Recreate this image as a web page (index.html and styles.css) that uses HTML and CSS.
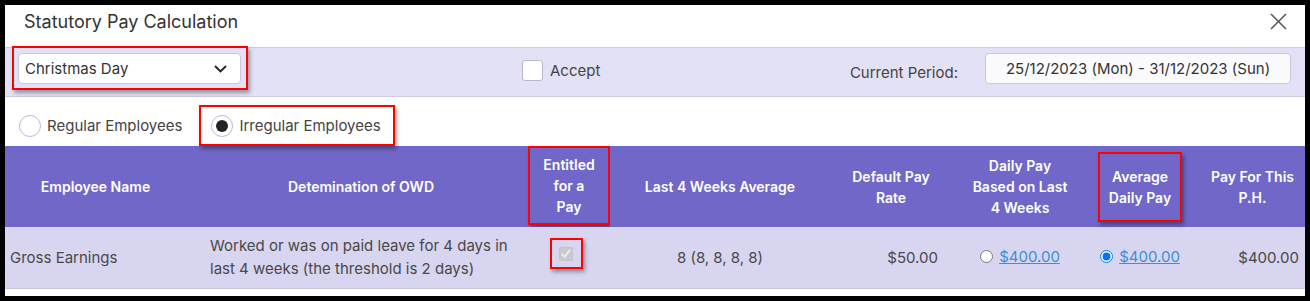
FILE: index.html
```html
<!DOCTYPE html>
<html lang="en">
<head>
    <meta charset="UTF-8">
    <title>Statutory Pay Calculation</title>
    <link rel="stylesheet" href="styles.css">
</head>
<body>
    <div class="dialog">
        <div class="dialog-title">
            <h2>Statutory Pay Calculation</h2>
            <svg class="close" width="17" height="17" viewBox="0 0 17 17">
                <path d="M1 1 L16 16 M16 1 L1 16" stroke="#555" stroke-width="1.5" fill="none"/>
            </svg>
        </div>

        <div class="filter-bar">
            <span class="mark mark--select">
                <span class="select">
                    <span>Christmas Day</span>
                    <svg width="13" height="8" viewBox="0 0 13 8">
                        <path d="M1 1 L6.5 6.5 L12 1" stroke="#222" stroke-width="1.8" fill="none"/>
                    </svg>
                </span>
            </span>
            <label class="accept">
                <span class="box"></span>
                Accept
            </label>
            <span class="period-label">Current Period:</span>
            <span class="period">25/12/2023 (Mon) - 31/12/2023 (Sun)</span>
        </div>

        <div class="type-row">
            <label class="radio-item">
                <span class="radio"></span>
                Regular Employees
            </label>
            <label class="radio-item mark mark--type">
                <span class="radio radio--on"></span>
                Irregular Employees
            </label>
        </div>

        <table class="pay-table">
            <colgroup>
                <col style="width: 181px">
                <col style="width: 342px">
                <col style="width: 82px">
                <col style="width: 220px">
                <col style="width: 114px">
                <col style="width: 152px">
                <col style="width: 88px">
                <col style="width: 121px">
            </colgroup>
            <thead>
                <tr>
                    <th>Employee Name</th>
                    <th class="th-owd">Detemination of OWD</th>
                    <th class="th-entitled"><div class="mark-cell">Entitled<br>for a<br>Pay</div></th>
                    <th>Last 4 Weeks Average</th>
                    <th class="th-rate">Default Pay<br>Rate</th>
                    <th>Daily Pay<br>Based on Last<br>4 Weeks</th>
                    <th class="th-avg"><span class="mark mark--avg">Average<br>Daily Pay</span></th>
                    <th class="th-ph">Pay For This<br>P.H.</th>
                </tr>
            </thead>
            <tbody>
                <tr>
                    <td class="name">Gross Earnings</td>
                    <td class="owd">Worked or was on paid leave for 4 days in last 4 weeks (the threshold is 2 days)</td>
                    <td class="center">
                        <span class="mark mark--check"><input type="checkbox" checked disabled></span>
                    </td>
                    <td class="center">8 (8, 8, 8, 8)</td>
                    <td class="money">$50.00</td>
                    <td class="center">
                        <label class="pick"><input type="radio" name="daily"><a href="#">$400.00</a></label>
                    </td>
                    <td class="center">
                        <label class="pick"><input type="radio" name="daily" checked><a href="#">$400.00</a></label>
                    </td>
                    <td class="money">$400.00</td>
                </tr>
            </tbody>
        </table>
    </div>
</body>
</html>
```

FILE: styles.css
```css
* {
  box-sizing: border-box;
  margin: 0;
  padding: 0;
}

body {
  background: #000;
  font-family: Inter, "Noto Sans", sans-serif;
  color: #444;
  overflow: hidden;
}

.dialog {
  background: #fff;
  margin: 5px;
  width: 1300px;
  height: 291px;
}

/* title */
.dialog-title {
  display: flex;
  align-items: center;
  justify-content: space-between;
  height: 42px;
  padding: 0 18px 9px 19px;
}

.dialog-title h2 {
  font-size: 18px;
  font-weight: 400;
  color: #333;
}

/* red annotation boxes */
.mark {
  border: 2px solid #f00;
  box-shadow: 2px 3px 4px rgba(0, 0, 0, 0.35);
}

.mark-cell {
  border: 2px solid #f00;
  box-shadow: 2px 3px 4px rgba(0, 0, 0, 0.35);
  height: 79px;
  display: flex;
  align-items: center;
  justify-content: center;
}

/* filter bar */
.filter-bar {
  display: flex;
  align-items: flex-start;
  height: 50px;
  padding: 0 14px 0 13px;
  background: #e3e1f5;
  border-top: 1px solid #cdcae4;
  border-bottom: 1px solid #cdcae4;
}

.mark--select {
  display: inline-block;
  padding: 5px 5px 4px 4px;
  margin: -2px -7px 0 -6px;
}

.select {
  display: flex;
  align-items: center;
  justify-content: space-between;
  width: 223px;
  height: 31px;
  padding: 0 13px 0 6px;
  background: #fff;
  border: 1px solid #c9c6e0;
  border-radius: 4px;
  font-size: 15px;
  color: #333;
}

.accept {
  display: flex;
  align-items: center;
  gap: 7px;
  margin: 12px 0 0 281px;
  font-size: 15px;
  color: #444;
}

.accept .box {
  width: 21px;
  height: 21px;
  background: #fff;
  border: 1px solid #b9b6cc;
  border-radius: 3px;
}

.period-label {
  align-self: center;
  margin-left: auto;
  font-size: 15px;
  color: #444;
}

.period {
  margin: 5px 0 0 27px;
  width: 306px;
  height: 31px;
  line-height: 29px;
  text-align: center;
  background: #fbfbfd;
  border: 1px solid #c9c6e0;
  border-radius: 4px;
  font-size: 15px;
  color: #333;
}

/* employee type */
.type-row {
  display: flex;
  align-items: center;
  height: 49px;
  padding: 8px 14px 0;
}

.radio-item {
  display: flex;
  align-items: center;
  gap: 6px;
  font-size: 15px;
  color: #444;
}

.radio {
  width: 22px;
  height: 22px;
  border: 1px solid #bdb8dc;
  border-radius: 50%;
  background: #fff;
  display: flex;
  align-items: center;
  justify-content: center;
}

.radio--on::after {
  content: "";
  width: 12px;
  height: 12px;
  border-radius: 50%;
  background: #222;
}

.mark--type {
  height: 41px;
  margin-left: 17px;
  padding: 0 12px 0 10px;
}

/* table */
.pay-table {
  width: 1300px;
  table-layout: fixed;
  border-collapse: collapse;
}

.pay-table th {
  height: 81px;
  padding: 0 4px;
  background: #7067c9;
  color: #fff;
  font-size: 14px;
  font-weight: 600;
  line-height: 21px;
  text-align: center;
  vertical-align: middle;
}

.pay-table th.th-owd {
  padding-left: 12px;
}

.pay-table th.th-entitled {
  padding: 0;
  vertical-align: top;
}

.pay-table th.th-rate {
  padding-left: 12px;
}

.pay-table th.th-avg {
  padding: 0;
}

.pay-table th.th-ph {
  padding-left: 20px;
}

.mark--avg {
  display: inline-block;
  padding: 12px 9px;
  white-space: nowrap;
}

.pay-table td {
  height: 61px;
  background: #d8d5f0;
  font-size: 15px;
  line-height: 23px;
  color: #484848;
  vertical-align: middle;
  border-bottom: 1px solid #c9c6dd;
}

.pay-table td.name {
  padding-left: 5px;
}

.pay-table td.owd {
  padding: 0 10px 0 24px;
}

.pay-table td.center {
  text-align: center;
}

.pay-table td.money {
  text-align: right;
  padding-right: 6px;
}

.mark--check {
  display: inline-flex;
  padding: 7px 8px 6px 7px;
  margin: 0 5px 8px 0;
  vertical-align: middle;
}

.mark--check input {
  width: 14px;
  height: 14px;
  margin: 0;
}

.pick {
  display: inline-flex;
  align-items: center;
  gap: 6px;
}

.pick input {
  margin: 0;
  width: 13px;
  height: 13px;
}

.pick a {
  color: #3d8fd6;
  text-decoration: underline;
}
```
